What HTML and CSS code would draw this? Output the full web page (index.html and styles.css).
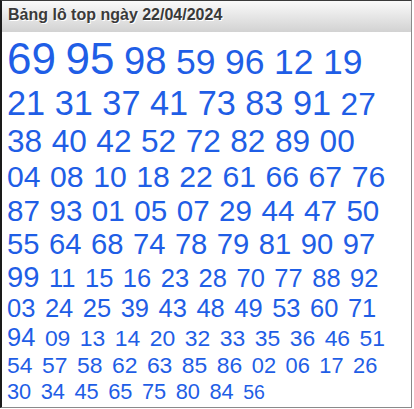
FILE: index.html
```html
<!DOCTYPE html>
<html lang="vi">
<head>
<meta charset="utf-8">
<title>Bảng lô top</title>
<link rel="stylesheet" href="styles.css">
</head>
<body>
<div class="box">
  <div class="head">Bảng lô top ngày 22/04/2024</div>
  <div class="nums">
    <span class="n t1">69</span><span class="n t1">95</span><span class="n t2">98</span><span class="n t3">59</span><span class="n t3">96</span><span class="n t3">12</span><span class="n t3">19</span>
    <span class="n t4">21</span><span class="n t4">31</span><span class="n t4">37</span><span class="n t4">41</span><span class="n t4">73</span><span class="n t4">83</span><span class="n t4">91</span>
    <span class="n t5">27</span><span class="n t5">38</span><span class="n t5">40</span><span class="n t5">42</span><span class="n t5">52</span><span class="n t5">72</span><span class="n t5">82</span><span class="n t5">89</span><span class="n t5">00</span>
    <span class="n t5b">04</span><span class="n t5b">08</span><span class="n t5b">10</span><span class="n t5b">18</span><span class="n t5b">22</span><span class="n t5b">61</span><span class="n t5b">66</span><span class="n t5b">67</span><span class="n t5b">76</span>
    <span class="n t6">87</span><span class="n t6">93</span><span class="n t6">01</span><span class="n t6">05</span><span class="n t6">07</span><span class="n t6">29</span><span class="n t6">44</span><span class="n t6">47</span><span class="n t6">50</span>
    <span class="n t7">55</span><span class="n t7">64</span><span class="n t7">68</span><span class="n t7">74</span><span class="n t7">78</span><span class="n t7">79</span><span class="n t7">81</span><span class="n t7">90</span><span class="n t7">97</span><span class="n t7">99</span>
    <span class="n t8">11</span><span class="n t8">15</span><span class="n t8">16</span><span class="n t8">23</span><span class="n t8">28</span><span class="n t8">70</span><span class="n t8">77</span><span class="n t8">88</span><span class="n t8">92</span><span class="n t8">03</span><span class="n t8">24</span><span class="n t8">25</span><span class="n t8">39</span><span class="n t8">43</span><span class="n t8">48</span><span class="n t8">49</span><span class="n t8">53</span><span class="n t8">60</span><span class="n t8">71</span><span class="n t8">94</span>
    <span class="n t9">09</span><span class="n t9">13</span><span class="n t9">14</span><span class="n t9">20</span><span class="n t9">32</span><span class="n t9">33</span><span class="n t9">35</span><span class="n t9">36</span><span class="n t9">46</span><span class="n t9">51</span><span class="n t9">54</span><span class="n t9">57</span><span class="n t9">58</span><span class="n t9">62</span><span class="n t9">63</span><span class="n t9">85</span><span class="n t9">86</span>
    <span class="n t10">02</span><span class="n t10">06</span><span class="n t10">17</span><span class="n t10">26</span><span class="n t10">30</span><span class="n t10">34</span><span class="n t10">45</span><span class="n t10">65</span><span class="n t10">75</span><span class="n t10">80</span><span class="n t10">84</span>
    <span class="n t11">56</span>
  </div>
</div>
</body>
</html>
```

FILE: styles.css
```css
html, body {
  margin: 0;
  padding: 0;
  background: #ffffff;
}

.box {
  width: 409px;
  height: 406px;
  border: 1px solid #8a8a8a;
  border-left: 2px solid #1a1a1a;
  border-top-color: #3a3a3a;
  font-family: "Liberation Sans", Arial, sans-serif;
  overflow: hidden;
}

.head {
  height: 31px;
  padding-left: 6px;
  line-height: 27px;
  font-size: 16px;
  font-weight: bold;
  color: #3a3a3a;
  text-shadow: 1px 1px 0 #ffffff;
  background: linear-gradient(to bottom, #fafafa 0%, #e6e6e6 50%, #d2d2d2 100%);
}

.nums {
  display: flex;
  flex-wrap: wrap;
  align-items: baseline;
  padding: 2px 9px 0 5px;
  color: #1f5ee6;
  font-size: 0;
}

.n {
  line-height: normal;
  margin-right: 9.5px;
}

.t1 { font-size: 44px; }
.t2 { font-size: 38.2px; }
.t3 { font-size: 35.5px; }
.t4 { font-size: 34.3px; }
.t5 { font-size: 31.6px; }
.t5b { font-size: 30.2px; }
.t6 { font-size: 29.6px; }
.t7 { font-size: 29.2px; }
.t8 { font-size: 25.5px; }
.t9 { font-size: 22.9px; }
.t10 { font-size: 21.8px; }
.t11 { font-size: 19.5px; }
```
